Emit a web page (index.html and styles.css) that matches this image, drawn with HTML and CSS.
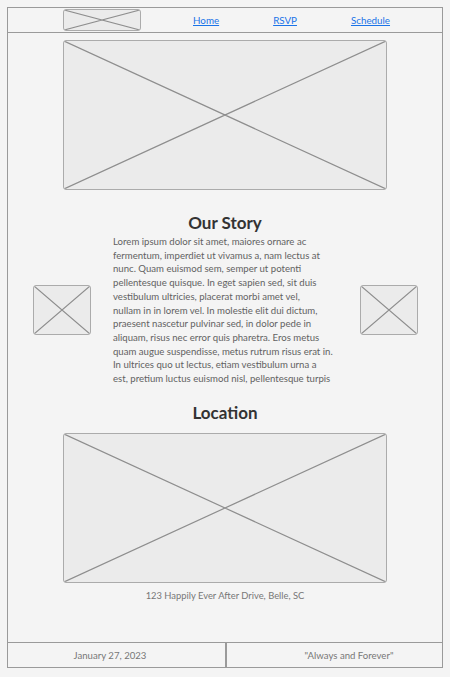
FILE: index.html
```html
<!DOCTYPE html>
<html lang="en">
<head>
  <meta charset="UTF-8">
  <meta name="viewport" content="width=device-width, initial-scale=1.0">
  <title>Our Wedding</title>
  <link rel="stylesheet" href="styles.css">
</head>
<body>
  <div class="frame">
    <!-- Top bar -->
    <header class="topbar">
      <div class="ph logo">
        <svg viewBox="0 0 100 100" preserveAspectRatio="none"><path d="M0 0 L100 100 M100 0 L0 100" vector-effect="non-scaling-stroke"/></svg>
      </div>
      <nav class="nav">
        <a href="#">Home</a>
        <a href="#">RSVP</a>
        <a href="#">Schedule</a>
      </nav>
    </header>

    <main class="content">
      <div class="ph hero">
        <svg viewBox="0 0 100 100" preserveAspectRatio="none"><path d="M0 0 L100 100 M100 0 L0 100" vector-effect="non-scaling-stroke"/></svg>
      </div>

      <section class="story">
        <h2>Our Story</h2>
        <div class="story-row">
          <div class="ph side">
            <svg viewBox="0 0 100 100" preserveAspectRatio="none"><path d="M0 0 L100 100 M100 0 L0 100" vector-effect="non-scaling-stroke"/></svg>
          </div>
          <p class="story-text">Lorem ipsum dolor sit amet, maiores ornare ac<br>
            fermentum, imperdiet ut vivamus a, nam lectus at<br>
            nunc. Quam euismod sem, semper ut potenti<br>
            pellentesque quisque. In eget sapien sed, sit duis<br>
            vestibulum ultricies, placerat morbi amet vel,<br>
            nullam in in lorem vel. In molestie elit dui dictum,<br>
            praesent nascetur pulvinar sed, in dolor pede in<br>
            aliquam, risus nec error quis pharetra. Eros metus<br>
            quam augue suspendisse, metus rutrum risus erat in.<br>
            In ultrices quo ut lectus, etiam vestibulum urna a<br>
            est, pretium luctus euismod nisl, pellentesque turpis</p>
          <div class="ph side">
            <svg viewBox="0 0 100 100" preserveAspectRatio="none"><path d="M0 0 L100 100 M100 0 L0 100" vector-effect="non-scaling-stroke"/></svg>
          </div>
        </div>
      </section>

      <section class="location">
        <h2>Location</h2>
        <div class="ph hero">
          <svg viewBox="0 0 100 100" preserveAspectRatio="none"><path d="M0 0 L100 100 M100 0 L0 100" vector-effect="non-scaling-stroke"/></svg>
        </div>
        <p class="address">123 Happily Ever After Drive, Belle, SC</p>
      </section>
    </main>

    <footer class="footer">
      <div class="footer-date">January 27, 2023</div>
      <div class="footer-quote">"Always and Forever"</div>
    </footer>
  </div>
</body>
</html>
```

FILE: styles.css
```css
:root {
  --page: #f4f4f4;
  --line: #9a9a9a;
  --ph-fill: #ebebeb;
  --ph-border: #ababab;
  --ph-cross: #8e8e8e;
  --heading: #333333;
  --text: #626262;
  --muted: #777777;
  --link: #1a73e8;
}

* {
  box-sizing: border-box;
  margin: 0;
  padding: 0;
}

body {
  background: var(--page);
  font-family: Lato, "Open Sans", sans-serif;
  color: var(--text);
}

.frame {
  margin: 7px;
  width: 436px;
  height: 661px;
  border: 1px solid var(--line);
  display: flex;
  flex-direction: column;
}

/* placeholders */
.ph {
  background: var(--ph-fill);
  border: 1.5px solid var(--ph-border);
  border-radius: 3px;
  overflow: hidden;
}

.ph svg {
  display: block;
  width: 100%;
  height: 100%;
}

.ph path {
  stroke: var(--ph-cross);
  stroke-width: 1.2;
  fill: none;
}

/* top bar */
.topbar {
  height: 25px;
  border-bottom: 1px solid var(--line);
  display: flex;
  align-items: center;
  padding-left: 55px;
}

.logo {
  width: 78px;
  height: 22px;
}

.nav {
  display: flex;
  gap: 54px;
  margin-left: 52px;
}

.nav a {
  color: var(--link);
  font-size: 9.8px;
  text-decoration: underline;
}

/* main content */
.content {
  flex: 1;
  display: flex;
  flex-direction: column;
  align-items: center;
  padding-top: 7px;
}

.hero {
  width: 324px;
  height: 150px;
}

h2 {
  font-size: 17px;
  line-height: 20px;
  font-weight: bold;
  color: var(--heading);
  text-align: center;
}

.story {
  margin-top: 23px;
  width: 100%;
}

.story h2 {
  margin-bottom: 2px;
}

.story-row {
  display: flex;
  align-items: center;
  justify-content: center;
  padding-left: 25px;
  padding-right: 24px;
  gap: 22px;
}

.side {
  width: 58px;
  height: 50px;
  flex: none;
}

.story-text {
  width: 225px;
  font-size: 9.6px;
  line-height: 13.7px;
  white-space: nowrap;
}

.location {
  margin-top: 17px;
  display: flex;
  flex-direction: column;
  align-items: center;
}

.location h2 {
  margin-bottom: 10px;
}

.address {
  margin-top: 6px;
  font-size: 9.4px;
  line-height: 13px;
  color: var(--muted);
}

/* footer */
.footer {
  height: 25px;
  border-top: 1px solid var(--line);
  display: grid;
  grid-template-columns: 217px 1fr;
  font-size: 9.6px;
  color: var(--muted);
}

.footer div {
  display: flex;
  align-items: center;
  justify-content: center;
}

.footer-date {
  padding-right: 13px;
}

.footer-quote {
  border-left: 2px solid var(--line);
  padding-left: 29px;
}
```
